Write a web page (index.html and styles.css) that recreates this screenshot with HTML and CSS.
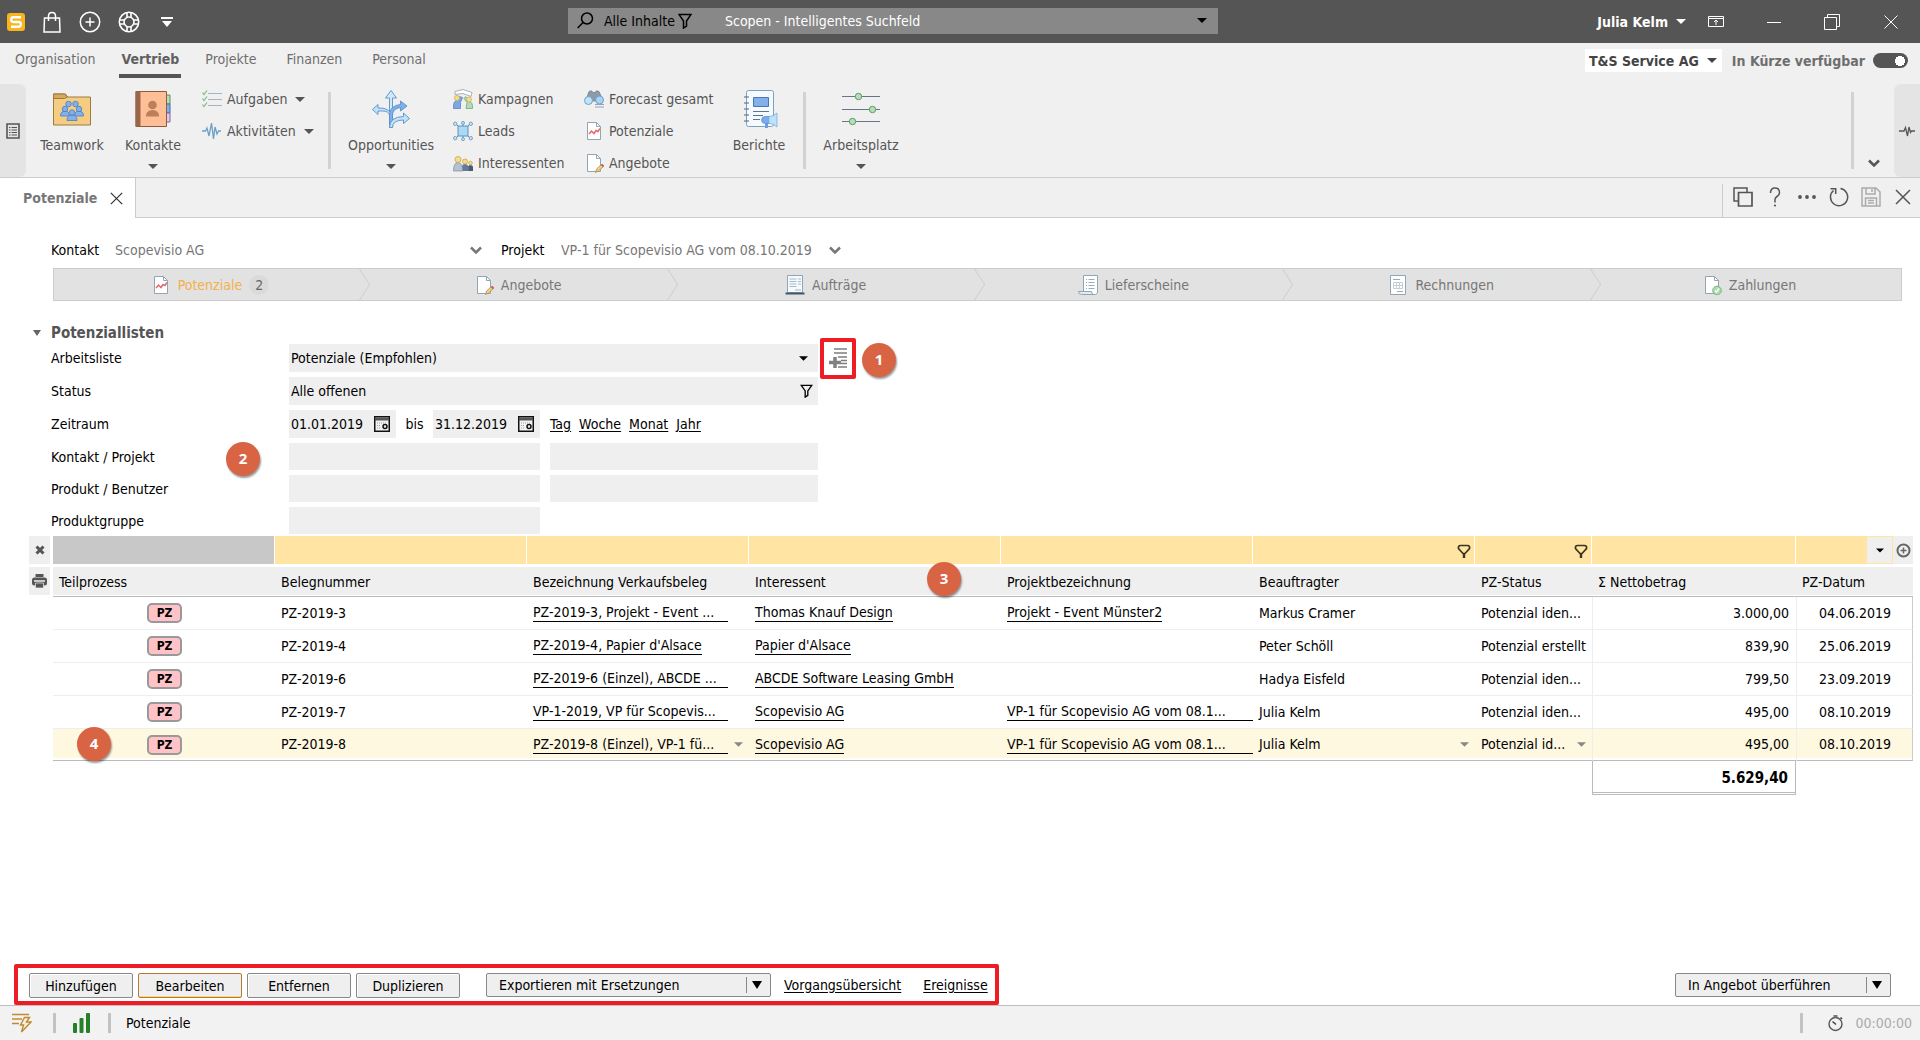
FILE: index.html
```html
<!DOCTYPE html>
<html lang="de">
<head>
<meta charset="utf-8">
<title>Potenziale</title>
<link rel="stylesheet" href="styles.css">
</head>
<body>
<svg class="sprite" aria-hidden="true">
  <symbol id="caret" viewBox="0 0 10 5"><path d="M0 0h10L5 5z" fill="currentColor"/></symbol>
  <symbol id="cross" viewBox="0 0 16 16"><path d="M1 1l14 14M15 1L1 15" fill="none" stroke="currentColor" stroke-width="1.5"/></symbol>
  <symbol id="chevron" viewBox="0 0 12 8"><path d="M1 1.5l5 5 5-5" fill="none" stroke="currentColor" stroke-width="2.5"/></symbol>
  <symbol id="funnel" viewBox="0 0 14 16"><path d="M1 1.5h12L8.5 8v5L5.500 15V8z" fill="none" stroke="currentColor" stroke-width="1.5"/></symbol>
  <symbol id="col-funnel" viewBox="0 0 14 15"><path d="M3.500 1.500h7q2.500 0 2 3L8 9.500H6L1.500 4.500q-.5-3 2-3z" fill="none" stroke="#3c3620" stroke-width="1.700"/><path d="M7 9.500v4.500" stroke="#3c3620" stroke-width="2.400"/></symbol>
  <symbol id="calendar" viewBox="0 0 16 16"><path d="M.75.75h14.500v14.500H.75z" fill="#f4f4f4" stroke="#111" stroke-width="1.500"/><path d="M1 3h14" stroke="#555" stroke-width="3"/><path d="M3 7h10M3 9.500h4M3 12h4" stroke="#999" stroke-dasharray="1 1"/><circle cx="11" cy="10.500" r="2" fill="none" stroke="#111" stroke-width="1.500"/></symbol>
  <symbol id="doc-chart" viewBox="0 0 20 20"><path d="M3.500 1.500h9l4 4v13h-13z" fill="#fff" stroke="#91a5b5"/><path d="M12.500 1.500v4h4" fill="none" stroke="#91a5b5"/><path d="M5 13l2.500-3 2.500 2.500 2-3 2 1 2-3" fill="none" stroke="#e06a6e" stroke-width="1.500"/></symbol>
  <symbol id="doc-pen" viewBox="0 0 20 20"><path d="M3.500 1.500h9l4 4v13h-13z" fill="#fff" stroke="#91a5b5"/><path d="M12.500 1.500v4h4" fill="none" stroke="#91a5b5"/><path d="M11.500 19.500l1-3.500 5-4.500 2 2-5 4.500z" fill="#f2d179" stroke="#a58a5c" stroke-width=".8"/><path d="M17.500 11.500l2 2" stroke="#cf5d62" stroke-width="2"/></symbol>
  <symbol id="doc-order" viewBox="0 0 20 20"><path d="M2.500.5h15v17h-15z" fill="#f5faff" stroke="#91a5b5"/><path d="M4.500 4h7M4.500 6.500h7M4.500 9h7M4.500 11.500h7M13 4h3M13 6.500h3M13 9h3M10 15h6" stroke="#a9b8c4"/><path d="M.5 18.500h19" stroke="#43566a" stroke-width="2"/></symbol>
  <symbol id="doc-delivery" viewBox="0 0 20 20"><path d="M5.500.5h14v17.500l-2 1.500h-12z" fill="#fff" stroke="#91a5b5"/><path d="M8 4.500h1M8 7.500h1M8 10.500h1M8 13.500h1M10.500 4.500h6M10.500 7.500h6M10.500 10.500h6M10.500 13.500h6" stroke="#9caab8"/><path d="M.5 16.500h13q0 2 2 3h-12q-3 0-3-3z" fill="#dcecf8" stroke="#91a5b5"/></symbol>
  <symbol id="doc-invoice" viewBox="0 0 20 20"><path d="M2.500.5h15v19h-15z" fill="#fff" stroke="#91a5b5"/><path d="M5 4.500h7M9 16.500h6" stroke="#9caab8"/><path d="M5.500 7.500h9v6h-9zM5.500 10.500h9M8.500 7.500v6M11.500 7.500v6" fill="none" stroke="#c3ced8"/></symbol>
  <symbol id="doc-check" viewBox="0 0 20 20"><path d="M3.500 1.500h9l4 4v13h-13z" fill="#fff" stroke="#91a5b5"/><path d="M12.500 1.500v4h4" fill="none" stroke="#91a5b5"/><circle cx="15" cy="15.500" r="4.300" fill="#aedbb2" stroke="#78b383"/><path d="M13 15.500l1.500 1.500 2.500-3.500" fill="none" stroke="#fff" stroke-width="1.300"/></symbol>
</svg>

<header class="titlebar">
  <div class="quick">
    <svg width="18" height="18" viewBox="0 0 18 18" role="img" aria-label="Scopevisio"><rect width="18" height="18" rx="3" fill="#fbb41c"/><path d="M14 4.200H6.200q-2 0-2 2.300T6.200 9h5.600q2 0 2 2.300t-2 2.400H4" fill="none" stroke="#fff" stroke-width="2.400"/></svg>
    <button class="shop" aria-label="Shop"><svg width="18" height="22" viewBox="0 0 18 22"><path d="M1.500 7h15l.5 14H1zM5.500 10V5q0-3.500 3.500-3.500T12.500 5v5" fill="none" stroke="#fff" stroke-width="1.500"/></svg></button>
    <button aria-label="Neu"><svg width="22" height="22" viewBox="0 0 22 22"><circle cx="11" cy="11" r="9.700" fill="none" stroke="#fff" stroke-width="1.500"/><path d="M11 6.500v9M6.500 11h9" stroke="#fff" stroke-width="1.500"/></svg></button>
    <button aria-label="Hilfe"><svg width="22" height="22" viewBox="0 0 22 22"><g fill="none" stroke="#fff" stroke-width="1.600"><circle cx="11" cy="11" r="9.700"/><circle cx="11" cy="11" r="5"/><path d="M9 1.500v5M13 1.500v5M9 15.500v5M13 15.500v5M1.500 9h5M1.500 13h5M15.500 9h5M15.500 13h5"/></g></svg></button>
    <button aria-label="Anpassen"><svg width="12" height="10" viewBox="0 0 12 10"><path d="M0 1h12" stroke="#fff" stroke-width="2"/><path d="M1 4h10L6 10z" fill="#fff"/></svg></button>
  </div>
  <form class="search" role="search">
    <svg width="17" height="17" viewBox="0 0 17 17"><circle cx="10" cy="6.500" r="5.500" fill="none" stroke="#000" stroke-width="1.500"/><path d="M6 10.500L.7 16" stroke="#000" stroke-width="1.500"/></svg>
    <button type="button" class="scope">Alle Inhalte <svg width="14" height="16"><use href="#funnel"/></svg></button>
    <input type="text" aria-label="Suche" value="Scopen - Intelligentes Suchfeld">
    <button type="button" aria-label="Suchverlauf"><svg width="10" height="5"><use href="#caret"/></svg></button>
  </form>
  <div class="window">
    <button class="user">Julia Kelm <svg width="10" height="5"><use href="#caret"/></svg></button>
    <button class="mode" aria-label="Menüband"><svg width="16" height="11" viewBox="0 0 16 11"><path d="M.5.5h15v10H.5zM.5 2.500h15M8 9V4M6 6l2-2 2 2" fill="none" stroke="#fff"/></svg></button>
    <button aria-label="Minimieren"><svg width="16" height="16" viewBox="0 0 16 16"><path d="M1 8.500h14" stroke="#fff"/></svg></button>
    <button aria-label="Wiederherstellen"><svg width="16" height="16" viewBox="0 0 16 16"><path d="M.5 3.500h12v12H.5zM3.500 3.500v-3h12v12h-3" fill="none" stroke="#fff"/></svg></button>
    <button aria-label="Fenster schließen"><svg width="14" height="14" viewBox="0 0 14 14"><path d="M.5.5l13 13M13.500.5l-13 13" stroke="#fff"/></svg></button>
  </div>
</header>

<nav class="menu">
  <a href="#">Organisation</a>
  <a href="#" class="active" aria-current="page">Vertrieb</a>
  <a href="#">Projekte</a>
  <a href="#">Finanzen</a>
  <a href="#">Personal</a>
  <button class="company">T&amp;S Service AG <svg width="10" height="5"><use href="#caret"/></svg></button>
  <label class="soon">In Kürze verfügbar <input type="checkbox" role="switch" checked></label>
</nav>

<section class="ribbon">
  <button class="handle" aria-label="Navigation"><svg width="14" height="16" viewBox="0 0 14 16"><path d="M1 1h12v14H1z" fill="none" stroke="#555" stroke-width="1.600"/><path d="M3 4.500h1.500M3 7h1.500M3 9.500h1.500M3 12h1.500M5.500 4.500h5.500M5.500 7h5.500M5.500 9.500h5.500M5.500 12h5.500" stroke="#555"/></svg></button>
  <button class="big teamwork"><svg width="38" height="38" viewBox="0 0 38 38"><path d="M.5 35V4h12l2 3h23v28z" fill="#f4cd82" stroke="#9c7a40"/><path d="M.5 8.500V4h11l3 3-3 1.500z" fill="#d6a95c" stroke="#9c7a40"/><g fill="#83b0ea" stroke="#4b7cc4" stroke-width=".8"><circle cx="15.500" cy="14" r="2.800"/><circle cx="22.500" cy="14" r="2.800"/><path d="M7.500 26q0-5 4.500-5t4.500 5zM21.500 26q0-5 4.500-5t4.500 5z"/><circle cx="12" cy="19" r="2.700"/><circle cx="26" cy="19" r="2.700"/><path d="M14 30.500q0-5.500 5-5.500t5 5.500z"/><circle cx="19" cy="22.500" r="2.700"/></g></svg>Teamwork</button>
  <button class="big contacts"><svg width="38" height="38" viewBox="0 0 38 38"><path d="M30 5h6v9h-6z" fill="#b4dfba" stroke="#579461"/><path d="M30 14h6v9h-6z" fill="#83b0ea" stroke="#3e6eae"/><path d="M30 23h6v9h-6z" fill="#dccbee" stroke="#8467a0"/><path d="M2 1.500h30.500v35H2z" fill="#ffbf96" stroke="#8f5a3e"/><path d="M1.500 1.500h5v35h-5z" fill="#9a6548"/><circle cx="18.500" cy="15" r="4.300" fill="#bb7f5c"/><path d="M12 26.500q0-6.500 6.500-6.500t6.500 6.500z" fill="#bb7f5c"/></svg>Kontakte<svg class="drop" width="10" height="5"><use href="#caret"/></svg></button>
  <div class="stack tasks">
    <button><svg width="20" height="20" viewBox="0 0 20 20"><path d="M6 4.500h14M6 10.500h14M6 16.500h14" stroke="#a5b5c2"/><path d="M.5 3.500l1.500 2 3-4M.5 9.500l1.500 2 3-4M.5 15.500l1.500 2 3-4" fill="none" stroke="#7fb98a" stroke-width="1.200"/></svg>Aufgaben<svg class="more" width="10" height="5"><use href="#caret"/></svg></button>
    <button><svg width="20" height="20" viewBox="0 0 20 20"><path d="M0 10h3.500l1.500-3 2 8 2.500-13 2 16 1.500-12 2 7 1.500-3H19" fill="none" stroke="#6f9fc4" stroke-width="1.300"/></svg>Aktivitäten<svg class="more" width="10" height="5"><use href="#caret"/></svg></button>
  </div>
  <span class="rule"></span>
  <button class="big opps"><svg width="38" height="38" viewBox="0 0 38 38"><g stroke="#5b8ec4" stroke-width=".9"><path d="M17.500 37V8h-4L19 .5 24.500 8h-4v29z" fill="#cfe9fc"/><path d="M17.500 30v-5q-1-4-7-4H6v3.500L.5 19.500 6 14.500V18q9-.5 13 5z" fill="#bfe3fb"/><path d="M17.500 37V24q1-8.500 11-9.500V11l6.500 5-6.500 5v-3.500q-8 1-8 8V37z" fill="#7fb0ee"/><path d="M17.500 37.500q0-10.500 14-11V23l6 5.500-6 5V30q-11 0-11 7.500z" fill="#bfe3fb"/></g></svg>Opportunities<svg class="drop" width="10" height="5"><use href="#caret"/></svg></button>
  <div class="stack leads">
    <button><svg width="20" height="20" viewBox="0 0 20 20"><path d="M2 2.500l8-2 9 3-1 4-8-3-8 1z" fill="#fff" stroke="#9aa8b4" stroke-width=".9"/><path d="M.5 19.500q-.5-7 3-8l3-4 3 1-2 5v6z" fill="#7ba7e6" stroke="#5a83bd" stroke-width=".8"/><path d="M19.500 19.500q.5-6-3-7l-4-5-1.500 2 3 4-1 6z" fill="#b0dcb6" stroke="#71a87a" stroke-width=".8"/><circle cx="4" cy="9" r="2.600" fill="#f7dd87" stroke="#c7a855" stroke-width=".7"/><circle cx="16" cy="10.500" r="2.500" fill="#f7dd87" stroke="#c7a855" stroke-width=".7"/></svg>Kampagnen</button>
    <button><svg width="20" height="20" viewBox="0 0 20 20"><path d="M5 5L2 2M15 5l3-3M5 15l-3 3M15 15l3 3M10 5V1.500M10 15v3.500" stroke="#5d91b8"/><path d="M5 5h10v10H5z" fill="#a9d9f7" stroke="#5d91b8"/><g fill="#c8e6f8" stroke="#5d91b8" stroke-width=".8"><circle cx="2.200" cy="2.800" r="1.700"/><circle cx="17.800" cy="2.800" r="1.700"/><circle cx="2.200" cy="17.200" r="1.700"/><circle cx="17.800" cy="17.200" r="1.700"/><circle cx="10" cy="1.900" r="1.500"/><circle cx="10" cy="18.200" r="1.500"/></g></svg>Leads</button>
    <button><svg width="20" height="20" viewBox="0 0 20 20"><path d="M14 18q0-6 3.500-6t2.500 6z" fill="#4a5c74"/><path d="M8 18q0-7 4-7t4 7z" fill="#657a96"/><path d="M.5 18q0-8.500 4.500-8.500T9.500 18z" fill="#b3c1d2" stroke="#8395a9" stroke-width=".8"/><g fill="#f9dc86" stroke="#c5a452" stroke-width=".8"><circle cx="5" cy="6.500" r="3"/><circle cx="12" cy="8.500" r="2.500"/><circle cx="17.500" cy="10" r="1.800"/></g></svg>Interessenten</button>
  </div>
  <div class="stack docs">
    <button><svg width="20" height="20" viewBox="0 0 20 20"><path d="M3 8l2-5.500q3-2 4 1h2q1-3 4-1L18 9l-6 3H8z" fill="#8d9aa9" stroke="#6e7d90" stroke-width=".7"/><circle cx="4.500" cy="11.500" r="4" fill="#bfe3fa" stroke="#719fc0"/><circle cx="15.500" cy="11" r="4" fill="#a9d3f5" stroke="#719fc0"/><path d="M11 15.500h9M11 18h9" stroke="#8fa4ba" stroke-width="1.200"/></svg>Forecast gesamt</button>
    <button><svg width="20" height="20"><use href="#doc-chart"/></svg>Potenziale</button>
    <button><svg width="20" height="20"><use href="#doc-pen"/></svg>Angebote</button>
  </div>
  <button class="big reports"><svg width="38" height="38" viewBox="0 0 38 38"><rect x="6.500" y=".5" width="27" height="36" rx="2" fill="#f5faff" stroke="#7d9fc0"/><path d="M4 7h5M4 13h5M4 19h5M4 25h5M4 31h5" stroke="#51677f" stroke-width="1.200"/><path d="M13.500 7.500h15v9h-15z" fill="#83b0ea" stroke="#4877b4"/><path d="M13 21.500h16M13 25.500h10M13 29.500h7" stroke="#62738a"/><path d="M25 33v5h3v-5z" fill="#6f9fe2"/><path d="M21.500 30q0-3.500 4-3.500h4v7h-4q-4 0-4-3.500z" fill="#7aaaf0" stroke="#5c8fd0" stroke-width=".8"/><path d="M29 26.500q5 0 8-3.500v14q-3-3.500-8-3.500z" fill="#bde3fb" stroke="#79aed6" stroke-width=".8"/></svg>Berichte</button>
  <span class="rule after-reports"></span>
  <button class="big workplace"><svg width="38" height="38" viewBox="0 0 38 38"><path d="M0 6.500h38M0 19.500h38M0 31.500h38" stroke="#66758c"/><g fill="#b4dfba" stroke="#5e9b69"><circle cx="16.500" cy="6.500" r="3.200"/><circle cx="30.500" cy="19.500" r="3.200"/><circle cx="10.500" cy="31.500" r="3.200"/></g></svg>Arbeitsplatz<svg class="drop" width="10" height="5"><use href="#caret"/></svg></button>
  <span class="rule end"></span>
  <button class="collapse" aria-label="Menüband einklappen"><svg width="12" height="8"><use href="#chevron"/></svg></button>
  <button class="handle right" aria-label="Aktivitäten"><svg width="16" height="12" viewBox="0 0 16 12"><path d="M0 6h5l1.500-3.500L8.500 11l1.500-9 1.500 5.500 1-1.500H16" fill="none" stroke="#555" stroke-width="1.300"/></svg></button>
</section>

<div class="tabbar">
  <div class="tab">Potenziale <button aria-label="Tab schließen"><svg width="13" height="13"><use href="#cross"/></svg></button></div>
  <div class="tools">
    <button aria-label="Duplizieren"><svg width="20" height="20" viewBox="0 0 20 20"><path d="M5 14H1V1h13v4" fill="none" stroke="#555" stroke-width="1.500"/><path d="M5.500 5.500H19V19H5.500z" fill="none" stroke="#555" stroke-width="1.700"/></svg></button>
    <button aria-label="Hilfe"><svg width="20" height="20" viewBox="0 0 20 20"><path d="M5.500 6q0-5 4.500-5t4.500 4.500q0 2.500-2.500 4T10 14v1.500" fill="none" stroke="#555" stroke-width="1.500"/><circle cx="10" cy="18.500" r="1.100" fill="#555"/></svg></button>
    <button aria-label="Mehr"><svg width="20" height="20" viewBox="0 0 20 20"><g fill="#555"><circle cx="3" cy="10" r="1.900"/><circle cx="10" cy="10" r="1.900"/><circle cx="17" cy="10" r="1.900"/></g></svg></button>
    <button aria-label="Aktualisieren"><svg width="20" height="20" viewBox="0 0 20 20"><path d="M11.500 1.600A8.600 8.600 0 1 1 4.500 3.500M1.500 1.800h5.200v5.200" fill="none" stroke="#555" stroke-width="1.500"/></svg></button>
    <button aria-label="Speichern" disabled><svg width="20" height="20" viewBox="0 0 20 20"><path d="M1 1h14l4 4v14H1zM5 1v6h9V1M4.500 19v-8h11v8M7 13.500h6M7 16h6M11 2v3" fill="none" stroke="#aaa" stroke-width="1.500"/></svg></button>
    <button aria-label="Schließen"><svg width="16" height="16"><use href="#cross"/></svg></button>
  </div>
</div>

<main>
  <div class="context">
    <label class="for-contact" for="kontakt">Kontakt</label>
    <div class="pick contact"><select id="kontakt"><option>Scopevisio AG</option></select><svg width="12" height="8"><use href="#chevron"/></svg></div>
    <label class="for-project" for="projekt">Projekt</label>
    <div class="pick project"><select id="projekt"><option>VP-1 für Scopevisio AG vom 08.10.2019</option></select><svg width="12" height="8"><use href="#chevron"/></svg></div>
  </div>

  <ol class="process">
    <li class="current"><a href="#"><svg width="20" height="20"><use href="#doc-chart"/></svg>Potenziale<span class="count">2</span></a></li>
    <li><a href="#"><svg width="20" height="20"><use href="#doc-pen"/></svg>Angebote</a></li>
    <li><a href="#"><svg width="20" height="20"><use href="#doc-order"/></svg>Aufträge</a></li>
    <li><a href="#"><svg width="20" height="20"><use href="#doc-delivery"/></svg>Lieferscheine</a></li>
    <li><a href="#"><svg width="20" height="20"><use href="#doc-invoice"/></svg>Rechnungen</a></li>
    <li><a href="#"><svg width="20" height="20"><use href="#doc-check"/></svg>Zahlungen</a></li>
  </ol>

  <section class="filters">
    <h2><svg width="8" height="6" viewBox="0 0 10 5" preserveAspectRatio="none"><path d="M0 0h10L5 5z" fill="#666"/></svg>Potenziallisten</h2>
    <div class="line">
      <label for="liste">Arbeitsliste</label>
      <div class="field full"><select id="liste"><option>Potenziale (Empfohlen)</option></select><svg width="9" height="5"><use href="#caret"/></svg></div>
      <button class="add" aria-label="Arbeitsliste hinzufügen"><svg width="18" height="20" viewBox="0 0 18 20"><path d="M5 1h13M5 5h13M9 9h9M12 12.500h6M12 15.500h6M9 19h9" stroke="#7d7d7d" stroke-width="1.700"/><path d="M0 14.500h12M6 9v11" stroke="#808080" stroke-width="3.500"/></svg></button>
      <span class="step one">1</span>
    </div>
    <div class="line">
      <label for="status">Status</label>
      <div class="field full"><input id="status" type="text" value="Alle offenen"><svg class="small-funnel" width="13" height="14"><use href="#funnel"/></svg></div>
    </div>
    <div class="line">
      <label for="von">Zeitraum</label>
      <div class="field date"><input id="von" type="text" value="01.01.2019"><button aria-label="Kalender öffnen"><svg width="16" height="16"><use href="#calendar"/></svg></button></div>
      <label class="until" for="bis">bis</label>
      <div class="field date"><input id="bis" type="text" value="31.12.2019"><button aria-label="Kalender öffnen"><svg width="16" height="16"><use href="#calendar"/></svg></button></div>
      <div class="ranges"><a href="#">Tag</a><a href="#">Woche</a><a href="#">Monat</a><a href="#">Jahr</a></div>
    </div>
    <div class="line low">
      <label for="f-kontakt">Kontakt / Projekt</label>
      <div class="field half"><input id="f-kontakt" type="text"></div>
      <div class="field rest"><input aria-label="Projekt" type="text"></div>
      <span class="step two">2</span>
    </div>
    <div class="line low">
      <label for="f-produkt">Produkt / Benutzer</label>
      <div class="field half"><input id="f-produkt" type="text"></div>
      <div class="field rest"><input aria-label="Benutzer" type="text"></div>
    </div>
    <div class="line low">
      <label for="f-gruppe">Produktgruppe</label>
      <div class="field half"><input id="f-gruppe" type="text"></div>
    </div>
  </section>

  <div class="grid">
    <table>
      <colgroup><col class="c-tool"><col class="c-222"><col class="c-252"><col class="c-222"><col class="c-252"><col class="c-252"><col class="c-222"><col class="c-117"><col class="c-204"><col class="c-117"></colgroup>
      <thead>
        <tr class="filter-row">
          <td class="tool"><button aria-label="Filter löschen"><svg width="10" height="10" viewBox="0 0 10 10"><path d="M1.500 1.500l7 7M8.500 1.500l-7 7" stroke="#555" stroke-width="3"/></svg></button></td>
          <td class="off"></td><td></td><td></td><td></td><td></td>
          <td><svg class="cf" width="14" height="15"><use href="#col-funnel"/></svg></td>
          <td><svg class="cf" width="14" height="15"><use href="#col-funnel"/></svg></td>
          <td></td>
          <td><div class="last"><button class="dd" aria-label="Auswahl"><svg width="8" height="5"><use href="#caret"/></svg></button><button class="plus" aria-label="Spalte hinzufügen"><svg width="15" height="15" viewBox="0 0 15 15"><circle cx="7.500" cy="7.500" r="6" fill="none" stroke="#666" stroke-width="2"/><path d="M7.500 4.500v6M4.500 7.500h6" stroke="#666" stroke-width="1.500"/></svg></button></div></td>
        </tr>
        <tr class="head">
          <td class="tool"><button aria-label="Drucken"><svg width="15" height="15" viewBox="0 0 15 15"><path d="M3.500 0h8v3h-8z" fill="#555"/><rect y="3.500" width="15" height="8" rx="2.500" fill="#555"/><path d="M2 7h11" stroke="#eee" stroke-width="1.500"/><path d="M3.500 9h8v5h-8z" fill="#555" stroke="#eee" stroke-width=".7"/></svg></button></td>
          <th>Teilprozess</th><th>Belegnummer</th><th>Bezeichnung Verkaufsbeleg</th><th>Interessent</th><th>Projektbezeichnung</th><th>Beauftragter</th><th>PZ-Status</th><th>Σ Nettobetrag</th><th>PZ-Datum</th>
        </tr>
      </thead>
      <tbody>
        <tr><td class="blank"></td><td class="kind"><span>PZ</span></td><td>PZ-2019-3</td><td><a class="name" href="#">PZ-2019-3, Projekt - Event ...</a></td><td><a href="#">Thomas Knauf Design</a></td><td><a href="#">Projekt - Event Münster2</a></td><td>Markus Cramer</td><td>Potenzial iden...</td><td class="sum">3.000,00</td><td class="day">04.06.2019</td></tr>
        <tr><td class="blank"></td><td class="kind"><span>PZ</span></td><td>PZ-2019-4</td><td><a href="#">PZ-2019-4, Papier d'Alsace</a></td><td><a href="#">Papier d'Alsace</a></td><td></td><td>Peter Schöll</td><td>Potenzial erstellt</td><td class="sum">839,90</td><td class="day">25.06.2019</td></tr>
        <tr><td class="blank"></td><td class="kind"><span>PZ</span></td><td>PZ-2019-6</td><td><a class="name" href="#">PZ-2019-6 (Einzel), ABCDE ...</a></td><td><a href="#">ABCDE Software Leasing GmbH</a></td><td></td><td>Hadya Eisfeld</td><td>Potenzial iden...</td><td class="sum">799,50</td><td class="day">23.09.2019</td></tr>
        <tr><td class="blank"></td><td class="kind"><span>PZ</span></td><td>PZ-2019-7</td><td><a class="name" href="#">VP-1-2019, VP für Scopevis...</a></td><td><a href="#">Scopevisio AG</a></td><td><a class="wide" href="#">VP-1 für Scopevisio AG vom 08.1...</a></td><td>Julia Kelm</td><td>Potenzial iden...</td><td class="sum">495,00</td><td class="day">08.10.2019</td></tr>
        <tr class="selected"><td class="blank"></td><td class="kind"><span>PZ</span><b class="step four">4</b></td><td>PZ-2019-8</td><td><div class="cell"><a class="name" href="#">PZ-2019-8 (Einzel), VP-1 fü...</a><svg width="9" height="5"><use href="#caret"/></svg></div></td><td><a href="#">Scopevisio AG</a></td><td><a class="wide" href="#">VP-1 für Scopevisio AG vom 08.1...</a></td><td><div class="cell">Julia Kelm<svg width="9" height="5"><use href="#caret"/></svg></div></td><td><div class="cell">Potenzial id...<svg width="9" height="5"><use href="#caret"/></svg></div></td><td class="sum">495,00</td><td class="day">08.10.2019</td></tr>
      </tbody>
      <tfoot><tr><td colspan="8"></td><td class="total">5.629,40</td><td></td></tr></tfoot>
    </table>
    <span class="step three">3</span>
  </div>

  <div class="actions">
    <div class="marked">
      <button class="btn">Hinzufügen</button>
      <button class="btn primary">Bearbeiten</button>
      <button class="btn">Entfernen</button>
      <button class="btn">Duplizieren</button>
      <div class="combo export"><select aria-label="Export"><option>Exportieren mit Ersetzungen</option></select><svg width="10" height="8" viewBox="0 0 10 8"><path d="M0 0h10L5 8z"/></svg></div>
      <a href="#">Vorgangsübersicht</a>
      <a class="events" href="#">Ereignisse</a>
    </div>
    <div class="combo transfer"><select aria-label="Überführen"><option>In Angebot überführen</option></select><svg width="10" height="8" viewBox="0 0 10 8"><path d="M0 0h10L5 8z"/></svg></div>
  </div>
</main>

<footer class="statusbar">
  <svg width="20" height="20" viewBox="0 0 20 20"><path d="M0 1.500h17M0 6h10M0 10.500h7" stroke="#c08a34" stroke-width="1.500"/><path d="M12.500 4.500h5L14.500 9H19L9.500 19l2-7H8.500z" fill="#f5efe2" stroke="#c08a34" stroke-width="1.400"/></svg>
  <i></i>
  <svg class="bars" width="17" height="20" viewBox="0 0 17 20"><rect y="10" width="4" height="10" rx="1" fill="#26802b"/><rect x="6.500" y="5" width="4" height="15" rx="1" fill="#26802b"/><rect x="13" width="4" height="20" rx="1" fill="#26802b"/></svg>
  <i></i>
  <span class="where">Potenziale</span>
  <i class="timer-rule"></i>
  <svg class="watch" width="16" height="18" viewBox="0 0 16 18"><circle cx="7.500" cy="10" r="6.500" fill="none" stroke="#555" stroke-width="1.400"/><path d="M5.500 1h4v2.500h-4z" fill="#777"/><path d="M4.500 7.500l3.500 3M12.500 3.500l1.500 1.500" stroke="#444" stroke-width="1.600"/></svg>
  <time>00:00:00</time>
</footer>
</body>
</html>
```

FILE: styles.css
```css
* { box-sizing: border-box; }
body {
  margin: 0;
  min-height: 100vh;
  display: flex;
  flex-direction: column;
  background: #fff;
  color: #000;
  font: 14px/20px "DejaVu Sans Condensed", "Noto Sans", sans-serif;
}
button, input, select {
  margin: 0;
  padding: 0;
  border: 0;
  border-radius: 0;
  background: none;
  color: inherit;
  font: inherit;
  appearance: none;
  outline: 0;
}
button { display: inline-flex; align-items: center; justify-content: center; white-space: nowrap; }
a { color: inherit; }
svg { flex: none; display: block; }
.sprite { position: absolute; width: 0; height: 0; }

/* title bar */
.titlebar {
  height: 43px;
  display: grid;
  grid-template-columns: 568px minmax(0, 650px) 1fr;
  align-items: center;
  background: #555;
  color: #fff;
}
.quick { display: flex; align-items: center; gap: 17px; padding-left: 7px; }
.quick .shop { margin: 0 1px; }
.quick button:last-child { margin-left: 4px; }
.search {
  height: 26px;
  margin-top: -2px;
  padding: 0 11px 0 9px;
  display: flex;
  align-items: center;
  background: #888;
  color: #000;
}
.scope { margin-left: 10px; gap: 3px; }
.search input { flex: 1; margin-left: 33px; color: #fff; }
.window { display: flex; align-items: center; justify-content: flex-end; gap: 42px; padding-right: 22px; }
.user { font-weight: 700; gap: 8px; margin-right: -20px; }
.window button:last-child { margin-left: 2px; }

/* main menu */
.menu { height: 40px; display: flex; align-items: flex-start; gap: 30px; padding: 2px 12px 0 15px; background: #f0f0f0; color: #6e6e6e; }
.menu a { line-height: 29px; text-decoration: none; }
.menu .active { margin: 0 -6px; padding: 0 2px; font-weight: 700; border-bottom: 4px solid #555; color: #606060; }
.company { height: 23px; margin: 4px -20px 0 auto; padding: 0 5px 0 4px; gap: 8px; background: #fff; color: #444; font-weight: 700; }
.soon { display: flex; align-items: center; gap: 8px; height: 31px; font-weight: 700; }
.soon input { width: 35px; height: 15px; border-radius: 8px; background: radial-gradient(circle at 27px 8px, #fff 5px, #555 5px); }

/* ribbon */
.ribbon { height: 95px; display: flex; align-items: flex-start; background: #f0f0f0; border-bottom: 1px solid #ccc; color: #555; }
.handle { width: 26px; height: 93px; margin-top: 1px; background: #e4e4e4; border-radius: 0 7px 7px 0; }
.handle.right { border-radius: 7px 0 0 7px; margin-left: 14px; }
.big { flex-direction: column; justify-content: flex-start; padding-top: 7px; }
.big > svg:first-child { margin-bottom: 7px; }
.drop { margin-top: 9px; }
.teamwork { width: 84px; margin-left: 4px; }
.contacts { width: 78px; }
.opps { width: 100px; margin-left: 10px; }
.reports { width: 70px; }
.workplace { width: 90px; margin-left: 10px; }
.stack { display: flex; flex-direction: column; align-items: flex-start; }
.stack button { height: 32px; gap: 5px; }
.more { margin-left: 3px; }
.tasks { width: 126px; margin-left: 10px; }
.leads { width: 131px; margin-left: 12px; }
.docs { width: 140px; }
.rule { width: 3px; height: 77px; margin-top: 9px; background: #d2d2d2; }
.after-reports { margin-left: 9px; }
.rule.end { margin-left: auto; }
.collapse { margin: 76px 0 0 14px; }

/* document tabs */
.tabbar { height: 40px; display: flex; justify-content: space-between; background: #f0f0f0; border-bottom: 1px solid #ccc; color: #555; }
.tab { width: 136px; height: 40px; display: flex; align-items: center; justify-content: space-between; padding: 0 12px 0 23px; background: #fff; border-right: 1px solid #ccc; font-weight: 700; color: #777; }
.tab button { color: #333; }
.tools { display: flex; align-items: center; gap: 12px; height: 33px; margin-top: 6px; padding: 0 9px 8px 10px; border-left: 1px solid #ccc; }
.tools button:last-child { margin-left: 2px; }

/* content */
main { flex: 1; display: flex; flex-direction: column; }
.context { display: flex; align-items: center; margin: 22px 51px 0; }
.for-contact { width: 64px; }
.for-project { width: 60px; }
.pick { display: flex; align-items: center; color: #777; }
.pick select { flex: 1; }
.contact { width: 367px; margin-right: 19px; }
.project { width: 280px; }
.process { display: flex; height: 33px; margin: 8px 18px 0 53px; padding: 0; list-style: none; background: #e2e2e2; border: 1px solid #ccc; color: #777; }
.process li { flex: 1; position: relative; display: flex; justify-content: center; align-items: center; padding-left: 4px; }
.process li + li::before {
  content: "";
  position: absolute;
  left: -14px;
  top: 4px;
  width: 22px;
  height: 22px;
  border: solid #ccc;
  border-width: 1px 1px 0 0;
  transform: scaleX(.65) rotate(45deg);
}
.process a { display: flex; align-items: center; gap: 7px; text-decoration: none; }
.current a { color: #f3b04b; }
.count { width: 20px; height: 20px; border-radius: 10px; background: #dadada; color: #666; text-align: center; }

.filters { padding: 22px 51px 0; }
.filters h2 { display: flex; align-items: center; gap: 10px; margin: 0 0 1px -18px; font-size: 15px; line-height: 20px; color: #555; }
.line { position: relative; display: flex; height: 28px; margin-bottom: 5px; align-items: center; }
.line.low { height: 27px; }
.line > label:first-child { width: 238px; }
.field { display: flex; align-items: center; height: 100%; background: #efefef; padding-left: 2px; }
.field input, .field select { flex: 1; min-width: 0; height: 100%; }
.full { width: 529px; padding-right: 10px; }
.full .small-funnel { margin-right: -5px; }
.date { width: 107px; padding-right: 6px; }
.until { width: 37px; text-align: center; }
.ranges { display: flex; gap: 8px; margin-left: 10px; }
.ranges a, .marked a { text-underline-offset: 2px; }
.half { width: 251px; }
.rest { width: 268px; margin-left: 10px; }
.add { width: 36px; height: 41px; margin-left: 2px; border: 4px solid #ee1c24; border-radius: 2px; }

/* numbered markers */
.step {
  position: absolute;
  width: 34px;
  height: 34px;
  border-radius: 50%;
  background: #d96444;
  box-shadow: 1px 2px 2px rgba(0, 0, 0, .4);
  color: #fff;
  font: 700 15px/33px "Open Sans", sans-serif;
  text-align: center;
}
.one { left: 811px; top: -1px; }
.two { left: 175px; top: -1px; }
.three { left: 898px; top: 26px; }
.four { left: 24px; top: -2px; }

/* result table */
.grid { position: relative; margin: -3px 8px 0 29px; }
table { width: 100%; table-layout: fixed; border-collapse: separate; border-spacing: 0; }
.c-tool { width: 24px; }
.c-222 { width: 222px; }
.c-252 { width: 252px; }
.c-117 { width: 117px; }
.c-204 { width: 204px; }
td, th { padding: 0 0 0 6px; text-align: left; font-weight: 400; white-space: nowrap; overflow: hidden; }
.filter-row td { height: 31px; padding: 0; background: #ffe4a3; border-right: 1px solid #fff; border-bottom: 3px solid #fff; }
.filter-row .off { background: #c8c8c8; }
.filter-row .tool, .head .tool { background: #efefef; border-right: 3px solid #fff; padding: 0; }
.tool button { width: 100%; height: 28px; }
.cf { margin: 3px 3px 0 auto; }
.filter-row td:last-child { border-right: 0; }
.last { display: flex; justify-content: flex-end; }
.last button { height: 28px; background: #efefef; }
.dd { width: 27px; border: 1px solid #ffe4a3; }
.plus { width: 20px; }
.head th { height: 30px; background: #efefef; border-bottom: 1px solid #bbb; box-shadow: inset 0 -1px #fff; }
.head .tool { border-bottom: 2px solid #fff; }
tbody td { height: 33px; border-bottom: 1px solid #eee; line-height: 17px; }
tbody .blank { border: 0; background: #fff; }
tbody .kind { position: relative; overflow: visible; padding-left: 94px; }
.kind span {
  display: block;
  width: 35px;
  height: 20px;
  border: 2px solid #999;
  border-radius: 5px;
  background: #ffc2c6;
  font: 700 12px/16px "DejaVu Sans Condensed", "DejaVu Sans", sans-serif;
  text-align: center;
}
tbody a { display: inline-block; line-height: 17px; border-bottom: 1px solid #000; text-decoration: none; vertical-align: top; }
tbody .name { width: 195px; }
tbody .wide { width: 100%; }
.sum, .total { text-align: right; padding-right: 7px; border-left: 1px solid #eee; }
.day { text-align: right; padding-right: 21px; border-left: 1px solid #eee; border-right: 1px solid #ccc; }
.selected td { height: 32px; background: #fff8e0; border-bottom-color: #bbb; box-shadow: inset 0 -2px #fff; }
.selected .blank { background: #fff; box-shadow: none; }
.cell { display: flex; align-items: center; justify-content: space-between; padding-right: 6px; }
.cell svg { color: #888; }
tfoot .total { height: 34px; padding-top: 2px; border: 1px solid #bbb; border-top: 0; border-bottom: 3px double #bbb; font-weight: 700; font-size: 15px; }

/* action bar */
.actions { display: flex; justify-content: space-between; margin: auto 29px 0 14px; }
.marked { display: flex; align-items: flex-start; gap: 5px; height: 41px; width: 985px; padding: 5px 0 0 11px; border: 4px solid #ee1c24; border-radius: 2px; }
.btn { width: 104px; height: 25px; border: 1px solid #888; border-radius: 2px; background: #efefef; box-shadow: inset 1px 1px #fff; }
.primary { border-color: #b9782c; box-shadow: inset 0 -1px #fcd778; }
.marked a { line-height: 25px; margin-left: 8px; }
.marked .events { margin-left: 17px; }
.combo { display: flex; align-items: center; height: 24px; padding-right: 8px; border: 1px solid #888; border-radius: 2px; background: #efefef; }
.combo select { flex: 1; height: 16px; line-height: 16px; padding-left: 12px; border-right: 1px solid #888; margin-right: 5px; }
.export { width: 285px; margin-left: 21px; }
.transfer { width: 216px; margin-top: 9px; }

/* status bar */
.statusbar { height: 35px; display: flex; align-items: center; padding: 0 8px 0 12px; background: #f2f2f2; border-top: 1px solid #c0c0c0; }
.statusbar i { width: 3px; height: 20px; background: #c2c2c2; margin: 0 17px 0 21px; }
.statusbar .bars + i { margin-left: 18px; }
.statusbar .where { margin-left: -2px; }
.statusbar .timer-rule { margin: 0 25px 0 auto; }
.statusbar time { margin-left: 11px; color: #aaa; }
```
